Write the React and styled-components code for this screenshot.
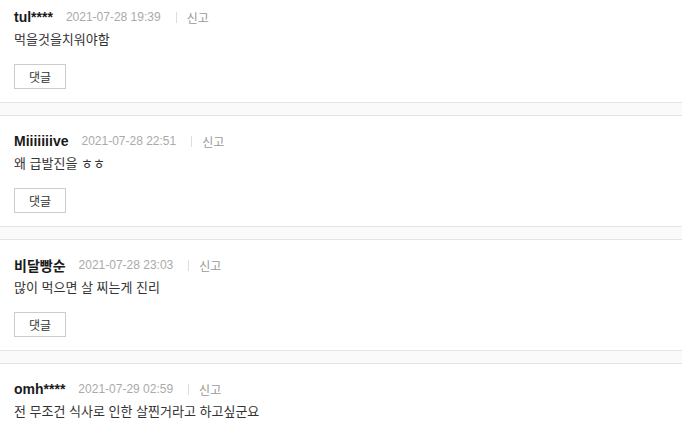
import React from "react";
import styled, { createGlobalStyle } from "styled-components";

const GlobalStyle = createGlobalStyle`
  html, body {
    margin: 0;
    padding: 0;
    background: #fff;
  }
  body {
    font-family: "Liberation Sans", "Noto Sans CJK KR", sans-serif;
    overflow: hidden;
  }
`;

const List = styled.div`
  display: flex;
  flex-direction: column;
  margin-top: -8px;
`;

const Comment = styled.div`
  padding: 14px 14px 13px;
  display: flex;
  flex-direction: column;
`;

const Meta = styled.div`
  display: flex;
  align-items: center;
  height: 22px;
`;

const Name = styled.span`
  font-size: 14px;
  font-weight: 700;
  color: #1a1a1a;
  margin-right: 13px;
`;

const Date = styled.span`
  font-size: 12px;
  color: #aaa;
`;

const Divider = styled.span`
  width: 1px;
  height: 11px;
  background: #ddd;
  margin: 0 10px 0 15px;
`;

const Report = styled.span`
  font-size: 12px;
  color: #999;
`;

const Text = styled.p`
  margin: 1px 0 0;
  font-size: 13px;
  line-height: 22px;
  color: #333;
`;

const Reply = styled.button`
  margin-top: 13px;
  width: 52px;
  height: 25px;
  padding: 0;
  border: 1px solid #ccc;
  background: #fff;
  font-family: inherit;
  font-size: 12px;
  color: #333;
  text-align: center;
`;

const Gap = styled.div`
  height: 12px;
  background: #fafafa;
  border-top: 1px solid #e4e4e4;
  border-bottom: 1px solid #e4e4e4;
`;

const comments = [
  { name: "tul****", date: "2021-07-28 19:39", text: "먹을것을치워야함" },
  { name: "Miiiiiiive", date: "2021-07-28 22:51", text: "왜 급발진을 ㅎㅎ" },
  { name: "비달빵순", date: "2021-07-28 23:03", text: "많이 먹으면 살 찌는게 진리" },
  { name: "omh****", date: "2021-07-29 02:59", text: "전 무조건 식사로 인한 살찐거라고 하고싶군요" },
];

const App = () => (
  <>
    <GlobalStyle />
    <List>
      {comments.map((c, i) => (
        <React.Fragment key={c.date}>
          {i > 0 && <Gap />}
          <Comment>
            <Meta>
              <Name>{c.name}</Name>
              <Date>{c.date}</Date>
              <Divider />
              <Report>신고</Report>
            </Meta>
            <Text>{c.text}</Text>
            <Reply>댓글</Reply>
          </Comment>
        </React.Fragment>
      ))}
    </List>
  </>
);

export default App;
